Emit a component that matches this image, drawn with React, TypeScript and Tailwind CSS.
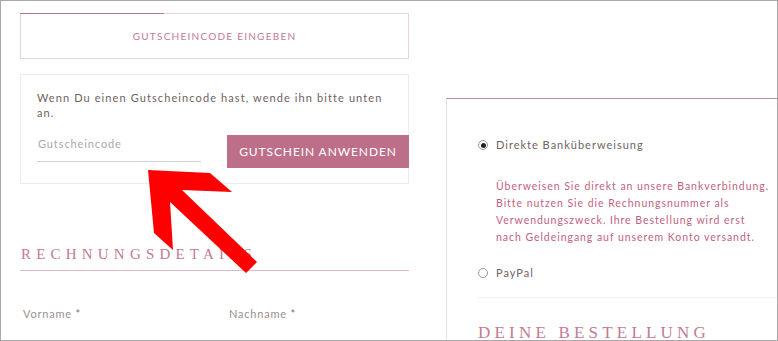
import React from 'react';

const sans = { fontFamily: 'Lato, "Noto Sans", sans-serif' };
const serif = { fontFamily: '"Liberation Serif", "DejaVu Serif", serif' };

function Radio({ checked }: { checked?: boolean }) {
  return (
    <span className="flex h-[10px] w-[10px] shrink-0 items-center justify-center rounded-full border border-[#9a9a9a] bg-white">
      {checked && <span className="h-[5px] w-[5px] rounded-full bg-[#222]" />}
    </span>
  );
}

function Arrow() {
  return (
    <svg
      className="pointer-events-none absolute -left-px -top-px h-[341px] w-[778px]"
      viewBox="0 0 778 341"
      aria-hidden="true"
    >
      <polygon
        fill="#ff0000"
        points="148,170 210,173 232,192 182,190 257,262 246,273 170,202 173,250 154,233"
      />
    </svg>
  );
}

export default function App() {
  return (
    <div className="relative h-[341px] w-[778px] overflow-hidden border border-[#a8a8a8] bg-white" style={sans}>
      <div className="flex">
        {/* left column */}
        <div className="ml-[19px] w-[389px] shrink-0">
          <div className="relative mt-[12px] flex h-[46px] items-center justify-center border border-[#ead3db]">
            <span className="absolute -left-px -top-px h-px w-[144px] bg-[#b9728b]" />
            <span className="text-[10px] tracking-[1.25px] text-[#c27992]">GUTSCHEINCODE EINGEBEN</span>
          </div>

          <div className="mt-[15px] border border-[#ececec] pb-[15px] pl-[16px] pt-[15px]">
            <p className="pr-[12px] text-[11px] leading-[15px] tracking-[1.1px] text-[#6e6262]">
              Wenn Du einen Gutscheincode hast, wende ihn bitte unten an.
            </p>
            <div className="flex items-start">
              <input
                className="mt-[5px] h-[37px] w-[164px] border-b border-[#cfcfcf] pl-px text-[11px] tracking-[0.9px] text-[#555] outline-none placeholder:text-[#a9a9a9]"
                placeholder="Gutscheincode"
                style={sans}
              />
              <button
                className="mt-[15px] ml-[26px] mr-[-2px] h-[33px] w-[182px] bg-[#bd6f89] text-[12px] tracking-[0.9px] text-white"
                style={sans}
              >
                GUTSCHEIN ANWENDEN
              </button>
            </div>
          </div>

          <h2
            className="mt-[61px] border-b border-[#dcbac6] pb-[7px] pl-px text-[15px] leading-[18px] tracking-[5.2px] text-[#c27b93]"
            style={serif}
          >
            RECHNUNGSDETAILS
          </h2>

          <div className="mt-[35px] flex text-[11px] tracking-[0.8px] text-[#9b8f8f]">
            <div className="w-[209px] pl-[3px]">
              Vorname <span className="align-top text-[#777]">*</span>
            </div>
            <div>
              Nachname <span className="align-top text-[#777]">*</span>
            </div>
          </div>
        </div>

        {/* right column */}
        <div className="ml-[37px] mt-[97px] h-[260px] flex-1 border-l border-t border-l-[#e4e4e4] border-t-[#c4849a] pl-[31px]">
          <div className="mt-[38px] flex h-[16px] items-center">
            <Radio checked />
            <span className="ml-[8px] text-[11px] tracking-[1px] text-[#6f6363]">Direkte Banküberweisung</span>
          </div>

          <p className="ml-[18px] mt-[25px] text-[10.5px] leading-[17px] tracking-[0.95px] text-[#c35f81]">
            Überweisen Sie direkt an unsere Bankverbindung.
            <br />
            Bitte nutzen Sie die Rechnungsnummer als
            <br />
            Verwendungszweck. Ihre Bestellung wird erst
            <br />
            nach Geldeingang auf unserem Konto versandt.
          </p>

          <div className="mt-[19px] flex h-[16px] items-center">
            <Radio />
            <span className="ml-[8px] text-[11px] tracking-[1px] text-[#6f6363]">PayPal</span>
          </div>

          <div className="mt-[16px] border-t border-[#f0f0f0]" />

          <h2 className="mt-[25px] text-[17px] leading-[20px] tracking-[4.2px] text-[#c27b93]" style={serif}>
            DEINE BESTELLUNG
          </h2>
        </div>
      </div>
      <Arrow />
    </div>
  );
}
